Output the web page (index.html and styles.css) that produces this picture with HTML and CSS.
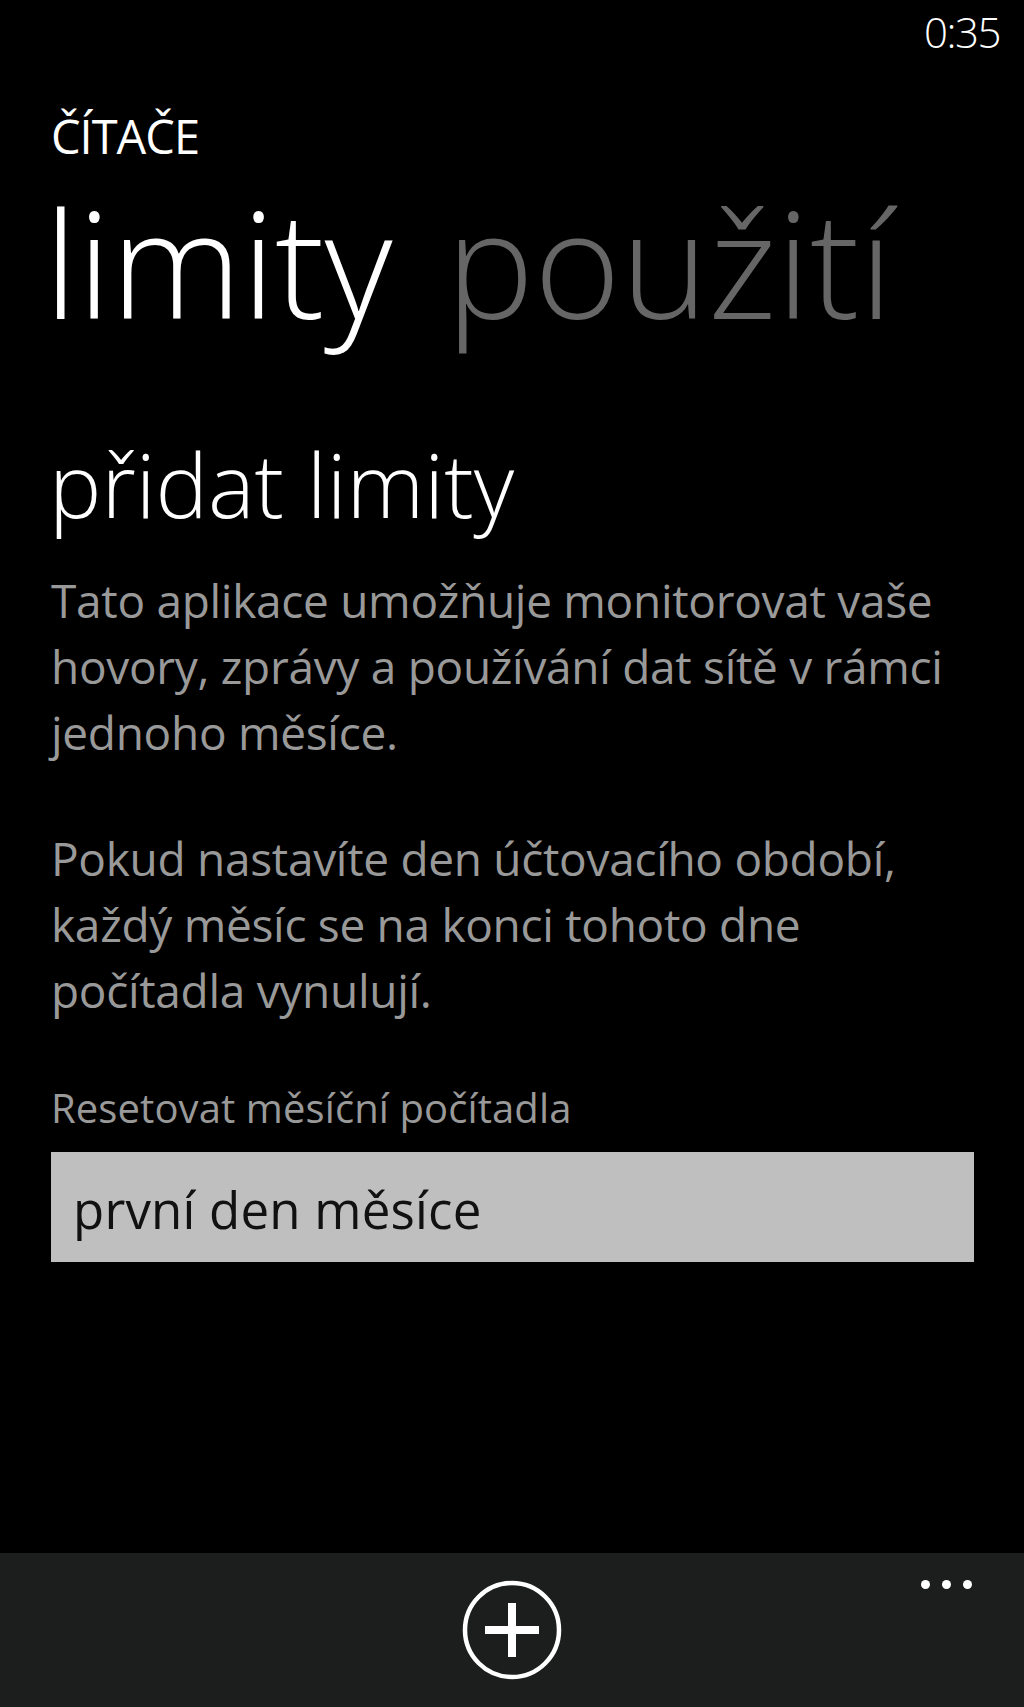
FILE: index.html
```html
<!DOCTYPE html>
<html lang="cs">
<head>
<meta charset="utf-8">
<title>Čítače</title>
<link rel="stylesheet" href="styles.css">
</head>
<body>
<div class="phone">
  <div class="status-bar"><span class="clock">0:35</span></div>
  <main class="content">
    <div class="app-title">ČÍTAČE</div>
    <div class="pivot-headers">
      <span class="pivot-item active">limity</span>
      <span class="pivot-item">použití</span>
    </div>
    <h1 class="section-title">přidat limity</h1>
    <p class="body-text">Tato aplikace umožňuje monitorovat vaše hovory, zprávy a používání dat sítě v rámci jednoho měsíce.</p>
    <p class="body-text second">Pokud nastavíte den účtovacího období, každý měsíc se na konci tohoto dne počítadla vynulují.</p>
    <div class="field-label">Resetovat měsíční počítadla</div>
    <div class="picker">první den měsíce</div>
  </main>
  <footer class="app-bar">
    <svg class="add-icon" width="104" height="104" viewBox="0 0 104 104" aria-hidden="true">
      <circle cx="52" cy="52" r="47" fill="none" stroke="#fff" stroke-width="4.5"/>
      <rect x="25" y="48" width="54" height="8" fill="#fff"/>
      <rect x="48" y="25" width="8" height="54" fill="#fff"/>
    </svg>
    <div class="more"><span></span><span></span><span></span></div>
  </footer>
</div>
</body>
</html>
```
FILE: styles.css
```css
html, body {
  margin: 0;
  padding: 0;
  background: #000;
}

.phone {
  width: 1024px;
  height: 1707px;
  display: flex;
  flex-direction: column;
  background: #000;
  color: #fff;
  font-family: "Open Sans", "Noto Sans", "DejaVu Sans", sans-serif;
  overflow: hidden;
}

.status-bar {
  height: 64px;
  display: flex;
  justify-content: flex-end;
  padding-right: 24px;
}

.clock {
  font-size: 42px;
  font-weight: 300;
  line-height: 64px;
  letter-spacing: -1.5px;
}

.content {
  flex: 1;
  padding: 0 50px 0 51px;
}

.app-title {
  margin-top: 42px;
  font-size: 47px;
  line-height: 60px;
  letter-spacing: -1px;
}

.pivot-headers {
  margin: 6px 0 0 -7px;
  font-size: 148px;
  font-weight: 300;
  line-height: 180px;
  letter-spacing: 0;
  white-space: nowrap;
}

.pivot-item {
  color: #666;
  margin-right: 15px;
}

.pivot-item.active {
  color: #fff;
}

.section-title {
  margin: 82px 0 0 -2px;
  font-size: 88px;
  font-weight: 300;
  line-height: 100px;
  letter-spacing: 0;
}

.body-text {
  margin: 33px 0 0 0;
  font-size: 46px;
  line-height: 66px;
  color: #999;
  letter-spacing: -0.3px;
}

.body-text.second {
  margin-top: 60px;
}

.field-label {
  margin-top: 60px;
  font-size: 40px;
  line-height: 50px;
  color: #999;
  letter-spacing: 0.1px;
}

.picker {
  margin-top: 19px;
  height: 105px;
  padding: 5px 0 0 22px;
  background: #bfbfbf;
  color: #111;
  font-size: 51px;
  line-height: 105px;
  letter-spacing: 0.2px;
}

.app-bar {
  height: 154px;
  flex: none;
  background: #1b1e1c;
  position: relative;
  display: flex;
  justify-content: center;
  align-items: flex-start;
}

.add-icon {
  margin-top: 25px;
}

.more {
  position: absolute;
  top: 27px;
  right: 52px;
  display: flex;
  gap: 12px;
}

.more span {
  width: 9px;
  height: 9px;
  border-radius: 50%;
  background: #fff;
}
```
